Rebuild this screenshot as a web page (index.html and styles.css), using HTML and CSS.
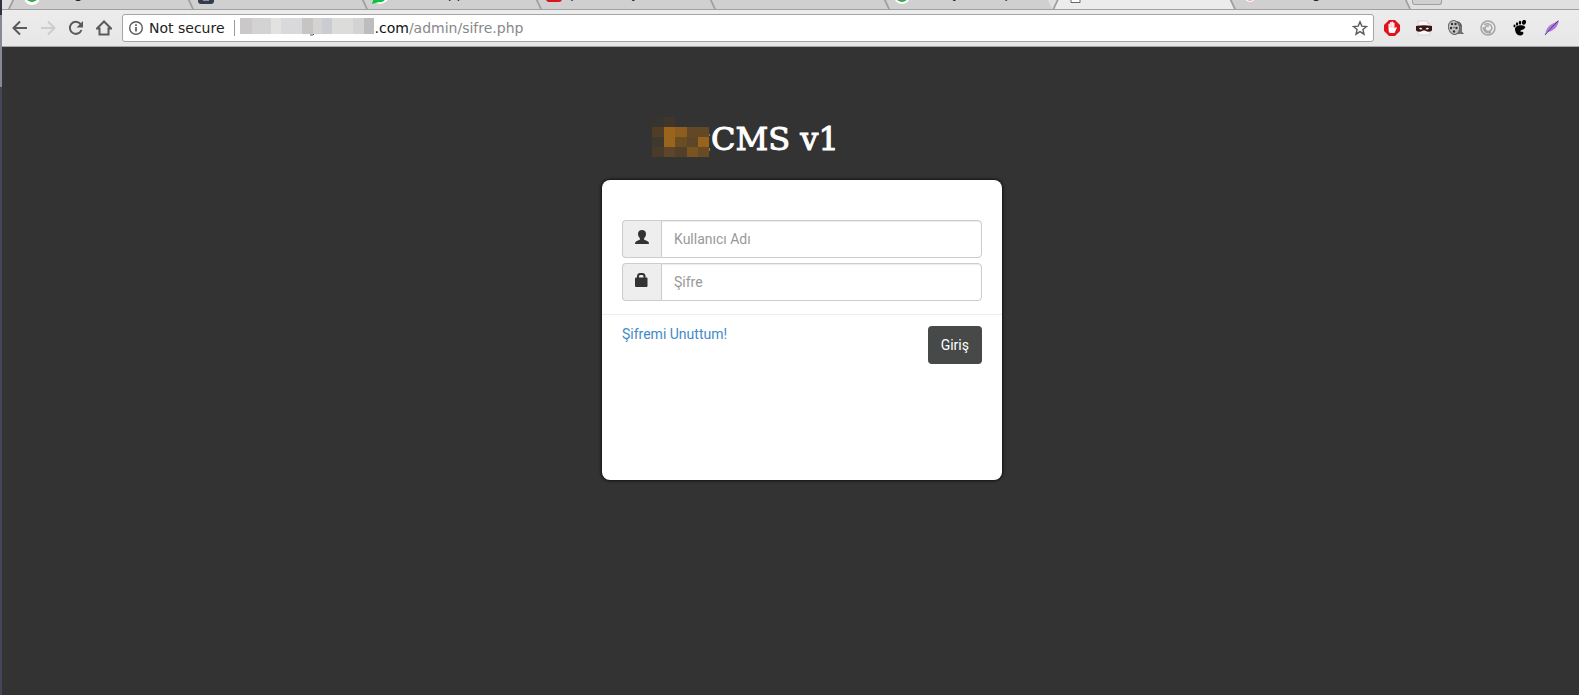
FILE: index.html
```
<!DOCTYPE html>
<html lang="tr">
<head>
<meta charset="utf-8">
<title>CMS v1</title>
<link rel="stylesheet" href="styles.css">
</head>
<body>
<div class="window">
  <header class="chrome">
    <div class="tabs">
      <div class="tab first"><svg class="fav" viewBox="0 0 16 10"><circle cx="8" cy="-3" r="8" fill="#fff"/><circle cx="8" cy="-4" r="6" fill="#34a853"/></svg><span class="title">Google</span></div>
      <div class="tab"><svg class="fav" viewBox="0 0 16 10"><rect x="0" y="-12" width="16" height="16" rx="3" fill="#353c4a"/><rect x="5" y="-2" width="6" height="3" fill="#8b909a"/></svg></div>
      <div class="tab"><svg class="fav" viewBox="0 0 16 10"><circle cx="8" cy="-5" r="9" fill="#fff"/><path d="M0 4L2-3h12Q13 3 7 2Z" fill="#0cc143"/></svg><span class="title">WhatsApp</span></div>
      <div class="tab"><svg class="fav" viewBox="0 0 16 10"><rect x="0" y="-10" width="16" height="12" rx="3" fill="#d9151b"/></svg><span class="title wide"><span>p</span><span>y</span></span></div>
      <div class="tab"></div>
      <div class="tab last"><svg class="fav" viewBox="0 0 16 10"><circle cx="8" cy="-4" r="8" fill="#fff"/><circle cx="8" cy="-4" r="6" fill="#34a853"/></svg><span class="title inset"><span>y</span><span>p</span></span></div>
      <div class="tab active"><svg class="fav" viewBox="0 0 16 10"><path d="M3-6V2.500H12V-6" fill="#fff" stroke="#666"/></svg></div>
      <div class="tab tail"><svg class="fav" viewBox="0 0 16 10"><circle cx="8" cy="-3" r="5" fill="#fff"/><circle cx="8" cy="-2" r="3" fill="#f4a9a9"/></svg><span class="title inset">g</span></div>
      <div class="newtab"></div>
    </div>
    <div class="toolbar">
      <button class="nav" aria-label="Back"><svg viewBox="0 0 16 16"><path d="M15 8H2M8 1.500L1.500 8L8 14.500" fill="none" stroke="#5a5a5a" stroke-width="2"/></svg></button>
      <button class="nav" aria-label="Forward"><svg viewBox="0 0 16 16"><path d="M1 8H14M8 1.500L14.500 8L8 14.500" fill="none" stroke="#ccc" stroke-width="2"/></svg></button>
      <button class="nav" aria-label="Reload"><svg viewBox="0 0 16 16"><path d="M13.500 10A6 6 0 1 1 12.500 4" fill="none" stroke="#5a5a5a" stroke-width="2"/><path d="M15 1V7.500H8.500Z" fill="#5a5a5a"/></svg></button>
      <button class="nav" aria-label="Home"><svg viewBox="0 0 16 16"><path d="M1 8.500L8 1.500L15 8.500H12.500V14.500H3.500V8.500Z" fill="none" stroke="#5a5a5a" stroke-width="2"/></svg></button>
      <div class="omnibox">
        <svg class="info" viewBox="0 0 16 16"><circle cx="8" cy="8" r="6.300" fill="none" stroke="#5a5a5a" stroke-width="1.400"/><path d="M8 7V11.500M8 4.300V6" stroke="#5a5a5a" stroke-width="1.700"/></svg>
        <span class="secure">Not secure</span>
        <svg class="mask" viewBox="0 0 134 18"><rect width="134" height="16" fill="#d3d3d4"/><path d="M0 0h12v16H0z" fill="#cbc8c9"/><path d="M31 0h10v16H31z" fill="#e2e2e1"/><path d="M41 0h21v16H41z" fill="#d9d9dc"/><path d="M62 0h11v16H62z" fill="#c7c5c4"/><path d="M82 0h10v16H82z" fill="#cbccd2"/><path d="M92 0h21v16H92z" fill="#dcdcda"/><path d="M124 0h10v16h-10z" fill="#bfbcbd"/><path d="M70 17h3l1-1" fill="none" stroke="#555"/></svg>
        <span class="url"><span class="host">.com</span>/admin/sifre.php</span>
        <svg class="star" viewBox="0 0 16 16"><path d="M8 1.800L9.800 6.100L14.500 6.500L10.900 9.500L12 14.200L8 11.600L4 14.200L5.100 9.500L1.500 6.500L6.200 6.100Z" fill="none" stroke="#5a5a5a" stroke-width="1.400"/></svg>
      </div>
      <div class="extensions">
        <svg viewBox="0 0 16 16"><path d="M5 0h6l5 5v6l-5 5H5l-5-5V5z" fill="#e2141b"/><path d="M4.500 9V4Q5.200 3 6 4V2.500Q6.800 1.500 7.500 2.500V2Q8.300 1 9 2V3Q9.800 2 10.500 3V8.500L12 7Q13.500 7 12.500 8.500L10.500 13H6Q4.500 12 4.500 9Z" fill="#fff"/><path d="M6 4V8M7.500 3V7.500M9 3V7.500" stroke="#e9a5a7" stroke-width=".5"/></svg>
        <svg viewBox="0 0 16 16"><path d="M2 1H11L14 4V15H2Z" fill="#f8f8f8" stroke="#d3d3d3"/><path d="M11 1V4H14" fill="#ddd"/><path d="M0 6Q8 4.500 16 6V10.500Q13 13 9 10.500H7Q3 13 0 10.500Z" fill="#3c1518"/><path d="M3 8.500Q4.500 7 6.500 9Q4.500 10 3 8.500M9.500 9Q11.500 7 13 8.500Q11.500 10 9.500 9" fill="#fff"/></svg>
        <svg viewBox="0 0 16 16"><path d="M7 1Q13 1 14 6V12L16 14H9Z" fill="#555"/><path d="M9 2V14M11 3V14M13 6V14" stroke="#aaa" stroke-width=".7"/><ellipse cx="6" cy="7.500" rx="5.500" ry="7" transform="rotate(-15 6 7.500)" fill="#c4c4c4" stroke="#666"/><g fill="#333"><circle cx="4" cy="4" r="1.200"/><circle cx="7.500" cy="4" r="1.200"/><circle cx="3" cy="8" r="1.200"/><circle cx="8.500" cy="8" r="1.200"/><circle cx="6" cy="11.500" r="1.200"/><circle cx="6" cy="7.500" r=".7"/></g></svg>
        <svg viewBox="0 0 16 16" fill="none" stroke="#a5a5a5" stroke-width="1.500"><circle cx="8" cy="8" r="7"/><path d="M4 4.500Q11 2 12 8Q11 12 7.500 11.500Q4.500 11 5 8Q6 5 9 6M3 7Q4 14 11 12.500"/></svg>
        <svg viewBox="0 0 16 16"><path d="M11 5.500C8 4.500 3 6 3 9C3 12 5 15.500 8 15.500C11 15.500 12 13 11 12C10 11.500 9 12 8.500 11.500C8 10 11 10 12.500 8.500C14 7 13 6 11 5.500Z" fill="#050505"/><ellipse cx="12" cy="2.300" rx="2" ry="2.500" transform="rotate(15 12 2.300)"/><ellipse cx="8" cy="2.700" rx="1.300" ry="1.900"/><ellipse cx="5" cy="4" rx="1.100" ry="1.700"/><ellipse cx="2.500" cy="6" rx="1" ry="1.400"/></svg>
        <svg viewBox="0 0 16 16"><path d="M1 15Q2 7 8 4Q12 2 15 0Q14 7 9 10Q6 12 3 12Z" fill="#ad7bd5"/><path d="M1 15Q6 9 14 1" fill="none" stroke="#5b2b91"/></svg>
      </div>
    </div>
  </header>

  <main class="page">
    <div class="login">
      <h1 class="logo">
        <svg class="brand" viewBox="0 0 58 40"><g shape-rendering="crispEdges"><path d="M0 0h23v10H0z" fill="#37332f"/><path d="M12 0h11v10H12z" fill="#40352a"/><path d="M0 10h12v10H0z" fill="#4f3d28"/><path d="M12 10h11v20H12z" fill="#9a641d"/><path d="M23 10h12v10H23z" fill="#8d5d20"/><path d="M35 10h22v10H35z" fill="#624825"/><path d="M0 20h12v10H0z" fill="#3f382d"/><path d="M23 20h12v10H23z" fill="#6a4c23"/><path d="M35 20h11v10H35z" fill="#5c4529"/><path d="M46 20h11v10H46z" fill="#99631c"/><path d="M0 30h12v10H0z" fill="#493b2a"/><path d="M12 30h11v10H12z" fill="#5c4528"/><path d="M23 30h12v10H23z" fill="#523f29"/><path d="M35 30h11v10H35z" fill="#785421"/><path d="M46 30h11v10H46z" fill="#674b25"/><path d="M57 17h1v2h-1zM57 31h1v3h-1z" fill="#b97a22"/></g></svg><span>CMS v1</span>
      </h1>
      <form class="card">
        <div class="fields">
          <div class="group">
            <label class="addon" for="user" aria-label="Kullanıcı Adı"><svg viewBox="0 0 14 14"><path d="M7 0C9.500 0 11 1.500 11 4C11 6 10 7 9 8.500V9.500L13 11.500Q14 12 14 14H0Q0 12 1 11.500L5 9.500V8.500C4 7 3 6 3 4C3 1.500 4.500 0 7 0Z" fill="#333"/></svg></label>
            <input id="user" type="text" placeholder="Kullanıcı Adı">
          </div>
          <div class="group">
            <label class="addon" for="pass" aria-label="Şifre"><svg viewBox="0 0 14 14"><path d="M3 6V3.500Q3 1 5 1H7.500Q9.500 1 9.500 3.500V6" fill="none" stroke="#333" stroke-width="2"/><rect x="0" y="4.500" width="12.500" height="9.500" rx="1" fill="#333"/></svg></label>
            <input id="pass" type="password" placeholder="Şifre">
          </div>
        </div>
        <div class="actions">
          <a href="#">Şifremi Unuttum!</a>
          <button class="submit" type="submit">Giriş</button>
        </div>
      </form>
    </div>
  </main>
</div>
</body>
</html>
```
FILE: styles.css
```
* { box-sizing: border-box; }
body {
  margin: 0;
  background: #333;
  font-family: Roboto, "Noto Sans", sans-serif;
  font-size: 14px;
  color: #333;
}
svg { display: block; flex: none; }
.window {
  min-height: 100vh;
  border-left: 2px solid;
  border-image: linear-gradient(#2f3342 16px, #868a93 16px 88px, #424656 88px) 1;
  overflow: hidden;
}

.chrome {
  border-bottom: 1px solid #a6a6a6;
  background: #eaeaea;
  font-family: "DejaVu Sans", sans-serif;
}
.tabs {
  display: flex;
  height: 10px;
  padding-left: 6px;
  overflow: hidden;
  background: #e0e0e0;
  border-bottom: 1px solid #a0a0a0;
}
.tab {
  position: relative;
  display: flex;
  flex: 0 1 174px;
  height: 9px;
  padding-left: 6px;
}
.tab::before {
  content: "";
  position: absolute;
  inset: 0;
  background: #d0d0d0;
  border-left: 2px solid #a0a0a0;
  transform: skewX(25deg);
  transform-origin: bottom;
}
.tab.first { padding-left: 16px; flex-basis: 184px; }
.tab.first::before { transform: skewX(-25deg); right: 4px; box-shadow: 8px 0 #d0d0d0; }
.tab.last { flex-basis: 164px; }
.tab.active { flex-basis: 182px; height: 10px; padding-left: 16px; }
.tab.active::before { background: #ececec; transform: skewX(-25deg); right: 4px; box-shadow: 8px 0 #ececec; }
.tab.tail { flex-basis: 175px; padding-left: 8px; }
.fav { position: relative; width: 16px; height: 10px; }
.title {
  position: relative;
  display: flex;
  margin-top: -15px;
  padding-left: 6px;
  line-height: 16px;
  color: #222;
}
.wide { gap: 52px; padding-left: 8px; }
.inset { gap: 44px; padding-left: 42px; }
.tab.tail .inset { padding-left: 54px; }
.newtab {
  position: relative;
  flex: 0 0 30px;
  height: 5px;
  background: #d0d0d0;
  border: 1px solid #a0a0a0;
  border-top: 0;
  border-radius: 0 0 3px 3px;
  margin-left: 3px;
}
.tab.tail::after {
  content: "";
  position: absolute;
  top: 0;
  right: -2px;
  width: 2px;
  height: 9px;
  background: #a0a0a0;
  transform: skewX(25deg);
  transform-origin: bottom;
}

.toolbar {
  display: flex;
  align-items: center;
  gap: 12px;
  height: 36px;
  padding: 0 19px 0 10px;
  background: linear-gradient(#ececec, #e7e7e7);
}
.nav { padding: 0; border: 0; background: none; width: 16px; height: 16px; }
.nav svg { width: 16px; height: 16px; }
.omnibox {
  display: flex;
  flex: 1;
  align-items: center;
  height: 28px;
  margin-left: -2px;
  padding: 0 5px;
  border: 1px solid #a5a5a5;
  border-radius: 3px;
  background: #fff;
}
.info { width: 16px; height: 16px; margin-right: 5px; }
.secure { padding-right: 9px; margin-right: 5px; line-height: 16px; border-right: 1px solid #999; color: #222; }
.mask { width: 134px; height: 18px; margin-bottom: 2px; margin-right: 1px; }
.url { flex: 1; color: #888; }
.host { color: #111; }
.star { width: 16px; height: 16px; }
.extensions { display: flex; gap: 16px; margin-left: -2px; }
.extensions svg { width: 16px; height: 16px; }

.page { display: flex; justify-content: center; padding: 70px 0 40px 23px; }
.login { width: 400px; }
.logo {
  display: flex;
  align-items: flex-end;
  gap: 1px;
  height: 40px;
  margin: 0 0 23px;
  padding-left: 50px;
  font: 400 32px/36px "DejaVu Serif", serif;
  color: #fff;
  -webkit-text-stroke: 1px #fff;
}
.brand { width: 58px; height: 40px; }
.card {
  min-height: 300px;
  background: #fff;
  border-radius: 8px;
  box-shadow: 0 0 3px 1px #111;
}
.fields { display: grid; gap: 5px; padding: 40px 20px 13px; }
.group { display: flex; height: 38px; }
.addon {
  display: flex;
  width: 39px;
  padding: 9px 12px;
  background: #eee;
  border: 1px solid #ccc;
  border-right: 0;
  border-radius: 4px 0 0 4px;
}
.addon svg { width: 14px; height: 14px; }
.group input {
  flex: 1;
  min-width: 0;
  padding: 0 12px;
  border: 1px solid #ccc;
  border-radius: 0 4px 4px 0;
  box-shadow: inset 0 1px 1px #ececec;
  font: inherit;
  color: #555;
}
.group input::placeholder { color: #999; opacity: 1; }
.actions {
  display: flex;
  align-items: flex-start;
  justify-content: space-between;
  padding: 11px 20px;
  border-top: 1px solid #eee;
}
.actions a { line-height: 16px; color: #428bca; text-decoration: none; }
.submit {
  height: 38px;
  padding: 0 13px;
  border: 0;
  border-radius: 4px;
  background: #474949;
  font: inherit;
  color: #fff;
}
```
